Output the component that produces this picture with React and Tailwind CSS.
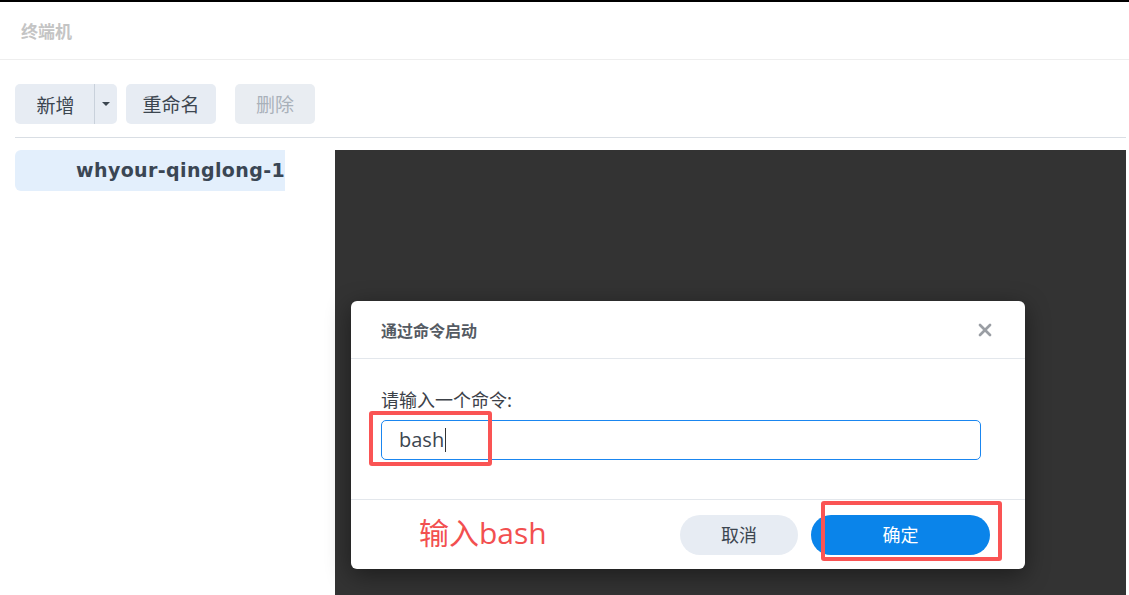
import { X } from 'lucide-react'

const cjk = '"Noto Sans CJK SC", "Open Sans", sans-serif'

export default function App() {
  return (
    <div
      className="relative w-[1129px] h-[595px] overflow-hidden bg-white"
      style={{ fontFamily: cjk }}
    >
      {/* header */}
      <div className="h-[60px] border-t-2 border-black border-b border-b-[#eeeeee] flex items-center px-[21px]">
        <span className="text-[17px] font-bold text-[#c4c4c4]">终端机</span>
      </div>

      <div className="pl-[15px] pr-[3px]">
        {/* toolbar */}
        <div className="mt-[24px] flex items-center h-[40px]">
          <div className="flex h-[40px] rounded-[5px] bg-[#e7ecf3] text-[#3c4650]">
            <button className="w-[79px] text-[19px] leading-none pl-[2px]">新增</button>
            <div className="w-px bg-[#c9d1db]" />
            <button className="w-[22px] flex items-center justify-center">
              <span className="block w-0 h-0 border-l-[4px] border-r-[4px] border-t-[4px] border-l-transparent border-r-transparent border-t-[#3c4650]" />
            </button>
          </div>
          <button className="ml-[9px] w-[90px] h-[40px] rounded-[5px] bg-[#e7ecf3] text-[19px] text-[#3c4650]">重命名</button>
          <button className="ml-[19px] w-[80px] h-[40px] rounded-[5px] bg-[#e9edf2] text-[19px] text-[#a9b1ba]">删除</button>
        </div>

        {/* divider */}
        <div className="mt-[13px] h-px bg-[#d9dee4]" />

        {/* main */}
        <div className="mt-[12px] flex h-[445px]">
          <div className="w-[270px] shrink-0">
            <div className="h-[41px] rounded-l-[6px] bg-[#e3effc] flex items-center pl-[61px] overflow-hidden whitespace-nowrap">
              <span
                className="text-[19px] font-bold tracking-[0.4px] text-[#3a4654]"
                style={{ fontFamily: '"DejaVu Sans", Verdana, sans-serif' }}
              >
                whyour-qinglong-1
              </span>
            </div>
          </div>

          <div className="ml-[50px] flex-1 relative bg-[#333333]">
            {/* dialog */}
            <div className="absolute left-[16px] top-[151px] w-[674px] h-[268px] bg-white rounded-[6px] shadow-[0_6px_24px_rgba(0,0,0,0.45)] flex flex-col">
              <div className="h-[58px] shrink-0 border-b border-[#e3e7ec] flex items-center justify-between pl-[30px] pr-[30px]">
                <span className="text-[16px] font-bold text-[#555b63]">通过命令启动</span>
                <X className="w-[20px] h-[20px] text-[#9a9ea4]" strokeWidth={3.2} />
              </div>
              <div className="flex-1 px-[30px] pt-[30px] border-b border-[#e3e7ec]">
                <div className="text-[18px] leading-[20px] text-[#3c4148]">请输入一个命令:</div>
                <div className="mt-[11px] h-[40px] w-[600px] border border-[#1a86f0] rounded-[5px] flex items-center pl-[17px]">
                  <span
                    className="text-[20px] text-[#3c4650]"
                    style={{ fontFamily: '"Open Sans", sans-serif' }}
                  >
                    bash
                  </span>
                  <span className="ml-px w-px h-[24px] bg-[#333]" />
                </div>
              </div>
              <div className="h-[69px] shrink-0 flex items-center justify-end pr-[35px] gap-[13px]">
                <button className="w-[118px] h-[40px] rounded-full bg-[#e7ecf3] text-[18px] text-[#3c4650]">取消</button>
                <button className="w-[179px] h-[40px] rounded-full bg-[#0a84ea] text-[18px] text-white">确定</button>
              </div>
            </div>
          </div>
        </div>
      </div>

      {/* annotations */}
      <div className="absolute left-[369px] top-[411px] w-[123px] h-[55px] border-[4px] border-[#fa5454] rounded-[3px]" />
      <div className="absolute left-[821px] top-[501px] w-[181px] h-[60px] border-[4px] border-[#fa5454] rounded-[3px]" />
      <div
        className="absolute left-[419px] top-[511px] text-[30px] leading-[40px] text-[#f25050]"
        style={{ fontFamily: '"Noto Sans CJK SC", "Open Sans", sans-serif' }}
      >
        输入<span style={{ fontFamily: '"Open Sans", sans-serif' }}>bash</span>
      </div>
    </div>
  )
}
